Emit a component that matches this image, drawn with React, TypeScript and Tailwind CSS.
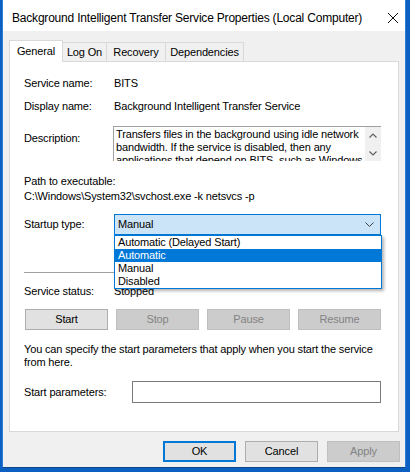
import { ReactNode } from "react";

const TABS = [
  { label: "General", w: "w-[54px]", active: true },
  { label: "Log On", w: "w-[44px]" },
  { label: "Recovery", w: "w-[59px]" },
  { label: "Dependencies", w: "w-[78px]" },
];

const STARTUP_OPTIONS = ["Automatic (Delayed Start)", "Automatic", "Manual", "Disabled"];

function Row({ label, children, className = "" }: { label: string; children: ReactNode; className?: string }) {
  return (
    <div className={`flex leading-[15px] ${className}`}>
      <div className="w-[90px] shrink-0">{label}</div>
      <div>{children}</div>
    </div>
  );
}

function Btn({ children, disabled, primary, className = "" }: { children: ReactNode; disabled?: boolean; primary?: boolean; className?: string }) {
  const look = disabled
    ? "bg-[#cccccc] border border-[#bfbfbf] text-[#838383]"
    : primary
      ? "bg-[#e1e1e1] border-2 border-[#0078d7]"
      : "bg-[#e1e1e1] border border-[#adadad]";
  return (
    <div className={`h-[21px] flex items-center justify-center ${look} ${className}`}>{children}</div>
  );
}

function StartupCombo() {
  return (
    <div className="relative w-[267px]">
      <div className="h-[21px] bg-[#cce4f7] border border-[#0078d7] flex items-center pl-[3px] pr-[5px]">
        <span className="flex-1">Manual</span>
        <svg width="9" height="5" viewBox="0 0 9 5" className="mr-[1px]">
          <path d="M0.5 0.5 L4.5 4.5 L8.5 0.5" fill="none" stroke="#404040" strokeWidth="1" />
        </svg>
      </div>
      {/* opened list, lies over the rows below */}
      <div className="absolute left-0 top-[21px] w-[268px] bg-white border border-[#0078d7] shadow-[2px_2px_3px_rgba(0,0,0,0.3)] z-20">
        {STARTUP_OPTIONS.map((opt) => (
          <div
            key={opt}
            className={`h-[13px] leading-[13px] pl-[3px] ${opt === "Automatic" ? "bg-[#0078d7] text-white" : ""}`}
          >
            {opt}
          </div>
        ))}
      </div>
    </div>
  );
}

function GeneralPanel() {
  return (
    <div className="w-[390px] h-[371px] bg-white border border-[#d9d9d9] pl-[14px]">
      <Row label="Service name:" className="mt-[14px]">BITS</Row>
      <Row label="Display name:" className="mt-[8px]">Background Intelligent Transfer Service</Row>

      <div className="flex mt-[12px]">
        <div className="w-[89px] shrink-0 pt-[5px] leading-[15px]">Description:</div>
        <div className="w-[268px] h-[35px] border-t border-l border-[#a0a0a0] flex overflow-hidden">
          <div className="flex-1 pl-[2px] pt-[1px] leading-[13px] whitespace-nowrap overflow-hidden">
            <div>Transfers files in the background using idle network</div>
            <div>bandwidth. If the service is disabled, then any</div>
            <div>applications that depend on BITS, such as Windows</div>
          </div>
          <div className="w-[16px] bg-[#f0f0f0] flex flex-col items-center justify-between pt-[6px] pb-[5px]">
            <svg width="8" height="5" viewBox="0 0 8 5">
              <path d="M0.5 4.5 L4 1 L7.5 4.5" fill="none" stroke="#606060" strokeWidth="1.2" />
            </svg>
            <svg width="8" height="5" viewBox="0 0 8 5">
              <path d="M0.5 0.5 L4 4 L7.5 0.5" fill="none" stroke="#606060" strokeWidth="1.2" />
            </svg>
          </div>
        </div>
      </div>

      <div className="mt-[13px] leading-[15px]">Path to executable:</div>
      <div className="leading-[15px]">C:\Windows\System32\svchost.exe -k netsvcs -p</div>

      <div className="flex items-center mt-[10px] leading-[15px]">
        <div className="w-[90px] shrink-0">Startup type:</div>
        <StartupCombo />
      </div>

      <div className="mt-[37px] w-[356px] h-px bg-[#a0a0a0]" />

      <Row label="Service status:" className="mt-[11px]">Stopped</Row>

      <div className="mt-[10px] ml-[1px] w-[356px] grid grid-cols-4 gap-x-[8px]">
        <Btn>Start</Btn>
        <Btn disabled>Stop</Btn>
        <Btn disabled>Pause</Btn>
        <Btn disabled>Resume</Btn>
      </div>

      <div className="mt-[13px] leading-[13px] w-[360px]">
        <div>You can specify the start parameters that apply when you start the service</div>
        <div>from here.</div>
      </div>

      <div className="flex items-center mt-[12px] leading-[15px]">
        <div className="w-[108px] shrink-0">Start parameters:</div>
        <div className="w-[249px] h-[22px] bg-white border border-[#7a7a7a]" />
      </div>
    </div>
  );
}

export default function App() {
  return (
    <div className="w-[410px] h-[472px] bg-[#0b60c2] overflow-hidden font-['Liberation_Sans',Arial,sans-serif] text-[11px] tracking-[-0.15px] text-black">
      <div className="ml-[2px] w-[404px] h-[468px] border-x border-b border-x-[#2a80d8] border-b-[#0a468a] bg-[#f0f0f0] flex flex-col">
        {/* title bar */}
        <div className="h-[31px] bg-white flex items-center pl-[9px] pr-[7px] pt-[4px]">
          <span className="flex-1 text-[12px] tracking-[-0.2px]">
            Background Intelligent Transfer Service Properties (Local Computer)
          </span>
          <svg width="10" height="10" viewBox="0 0 10 10">
            <path d="M0 0 L10 10 M10 0 L0 10" stroke="#111" strokeWidth="1" />
          </svg>
        </div>

        <div className="pl-[6px] pt-[9px]">
          {/* tabs */}
          <div className="flex items-end h-[21px]">
            {TABS.map((t) =>
              t.active ? (
                <div
                  key={t.label}
                  className={`${t.w} h-[22px] -mb-px relative z-10 bg-white border-x border-t border-[#d9d9d9] flex items-start justify-center pt-[3px] leading-[15px]`}
                >
                  {t.label}
                </div>
              ) : (
                <div
                  key={t.label}
                  className={`${t.w} h-[19px] bg-[#f0f0f0] border-t border-r border-[#d9d9d9] flex items-center justify-center leading-[15px]`}
                >
                  {t.label}
                </div>
              ),
            )}
          </div>
          <div className="relative">
            <GeneralPanel />
          </div>
        </div>

        {/* dialog buttons */}
        <div className="mt-[9px] pr-[5px] flex justify-end gap-x-[9px]">
          <Btn primary className="w-[73px]">OK</Btn>
          <Btn className="w-[73px]">Cancel</Btn>
          <Btn disabled className="w-[73px]">Apply</Btn>
        </div>
      </div>
    </div>
  );
}
